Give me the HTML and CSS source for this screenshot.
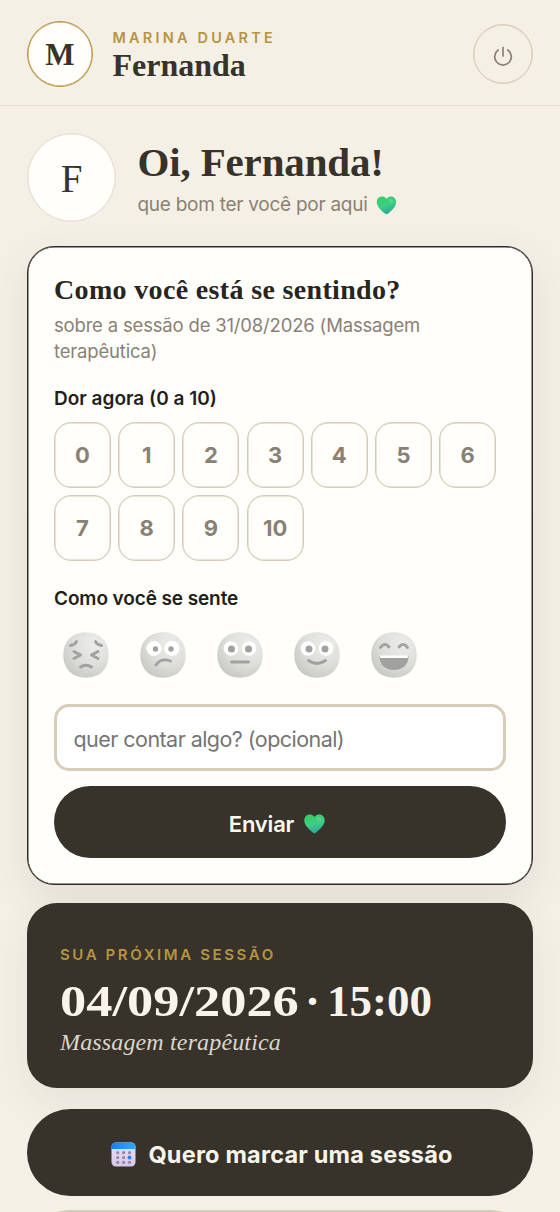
FILE: index.html
```html
<!DOCTYPE html>
<html lang="pt-BR">
<head>
<meta charset="utf-8">
<meta name="viewport" content="width=device-width, initial-scale=1">
<title>Marina Duarte</title>
<link rel="stylesheet" href="styles.css">
</head>
<body>
<svg class="defs" width="0" height="0" aria-hidden="true">
  <defs>
    <radialGradient id="face" cx="0.68" cy="0.25" r="0.85"><stop offset="0" stop-color="#ececea"/><stop offset="0.55" stop-color="#dededb"/><stop offset="1" stop-color="#c6c6c3"/></radialGradient>
    <linearGradient id="heart" x1="0.3" y1="0" x2="0.65" y2="1"><stop offset="0" stop-color="#35cf62"/><stop offset="0.5" stop-color="#3fcd86"/><stop offset="1" stop-color="#2ba39c"/></linearGradient>
    <linearGradient id="cal" x1="0" y1="0" x2="1" y2="0"><stop offset="0" stop-color="#1c7df0"/><stop offset="1" stop-color="#31a8ff"/></linearGradient>
    <linearGradient id="page" x1="0" y1="0" x2="0" y2="1"><stop offset="0" stop-color="#e9e2f2"/><stop offset="1" stop-color="#d9c6ea"/></linearGradient>
    <symbol id="i-heart" viewBox="0 0 22 20"><path fill="url(#heart)" d="M11 3C9.600 1 7.800.5 6.200.5C3 .5.800 3 .800 6.200C.800 11.500 6 15.500 9.700 18.700Q11 19.700 12.300 18.700C16 15.500 21.200 11.500 21.200 6.200C21.200 3 19 .5 15.800.5C14.200.5 12.400 1 11 3Z"/><ellipse cx="15.500" cy="5" rx="2.800" ry="1.600" fill="#7be8a0" opacity=".35" transform="rotate(25 15.500 5)"/></symbol>
    <symbol id="i-face" viewBox="0 0 46 46"><path fill="url(#face)" d="M23 .3C36.700 .3 45.700 9.300 45.700 23S36.700 45.700 23 45.700.3 36.700 .3 23 9.300 .3 23 .3Z"/></symbol>
  </defs>
</svg>
<header class="topbar">
  <div class="logo">M</div>
  <div class="brand">
    <div class="brand-name">MARINA DUARTE</div>
    <div class="brand-user">Fernanda</div>
  </div>
  <button class="power" aria-label="Sair"><svg width="20" height="20" viewBox="0 0 20 20" fill="none" stroke="#8a8175" stroke-width="1.700" stroke-linecap="round"><path d="M10 1.400V10M5.200 4A8.300 8.300 0 1 0 14.800 4"/></svg></button>
</header>
<main class="content">
  <section class="hello">
    <div class="avatar">F</div>
    <div>
      <h1 class="hello-title">Oi, Fernanda!</h1>
      <p class="hello-sub"><span>que bom ter você por aqui</span><svg width="21" height="19"><use href="#i-heart"/></svg></p>
    </div>
  </section>

  <section class="checkin">
    <h2 class="checkin-title">Como você está se sentindo?</h2>
    <p class="checkin-sub">sobre a sessão de 31/08/2026 (Massagem<br>terapêutica)</p>
    <div class="label label-pain">Dor agora (0 a 10)</div>
    <div class="scale">
      <button>0</button><button>1</button><button>2</button><button>3</button><button>4</button><button>5</button><button>6</button><button>7</button><button>8</button><button>9</button><button>10</button>
    </div>
    <div class="label label-mood">Como você se sente</div>
    <div class="moods">
      <svg viewBox="0 0 46 46"><use href="#i-face"/><g fill="none" stroke="#a1a1a0" stroke-width="2.900" stroke-linecap="round" stroke-linejoin="round"><path d="M7.500 13.500Q12 13 13.500 9.500M38.500 13.500Q34 13 32.500 9.500M11 19.500L17.500 23L11 26.500M35 19.500L28.500 23L35 26.500M17.500 35Q23 31.500 28.500 35"/></g></svg>
      <svg viewBox="0 0 46 46"><use href="#i-face"/><circle cx="14" cy="16.500" r="7.600" fill="#fff"/><circle cx="32" cy="16.500" r="7.600" fill="#fff"/><g fill="#a1a1a0"><circle cx="15.500" cy="17" r="2.700"/><circle cx="31" cy="17" r="2.700"/></g><path d="M16 33Q21 25.500 30.500 29" fill="none" stroke="#a1a1a0" stroke-width="2.900" stroke-linecap="round"/></svg>
      <svg viewBox="0 0 46 46"><use href="#i-face"/><circle cx="14" cy="16.500" r="7.300" fill="#fff"/><circle cx="32" cy="16.500" r="7.300" fill="#fff"/><g fill="#a1a1a0"><circle cx="14.500" cy="17" r="3.500"/><circle cx="31.500" cy="17" r="3.500"/></g><path d="M14.500 30H31.500" stroke="#a1a1a0" stroke-width="2.900" stroke-linecap="round"/></svg>
      <svg viewBox="0 0 46 46"><use href="#i-face"/><circle cx="14" cy="16.500" r="7.300" fill="#fff"/><circle cx="32" cy="16.500" r="7.300" fill="#fff"/><g fill="#a1a1a0"><circle cx="15" cy="17" r="3.500"/><circle cx="31" cy="17" r="3.500"/></g><path d="M14.500 28.500Q23 34.500 31.500 28.500" fill="none" stroke="#a1a1a0" stroke-width="3" stroke-linecap="round"/></svg>
      <svg viewBox="0 0 46 46"><use href="#i-face"/><g fill="none" stroke="#a1a1a0" stroke-width="2.900" stroke-linecap="round"><path d="M9.500 15.500Q13.500 9.500 18 15M28 15Q32.500 9.500 36.500 15.500"/></g><path fill="#a1a1a0" d="M8.500 24H37.500C38 32.500 31.500 38 23 38S8 32.500 8.500 24Z"/><path fill="#fff" d="M8.700 23.500H37.300L36.500 26H9.500Z"/></svg>
    </div>
    <input class="note" placeholder="quer contar algo? (opcional)">
    <button class="send"><span>Enviar</span><svg width="23" height="20"><use href="#i-heart"/></svg></button>
  </section>

  <section class="next">
    <div class="next-label">SUA PRÓXIMA SESSÃO</div>
    <div class="next-date"><span class="day">04/09/2026</span><span>·</span><span>15:00</span></div>
    <div class="next-kind">Massagem terapêutica</div>
  </section>

  <button class="book">
    <svg width="25" height="25" viewBox="0 0 25 25"><rect x=".5" y=".5" width="24" height="24" rx="4.500" fill="url(#page)"/><path fill="url(#cal)" d="M.5 7V5Q.5.5 5 .5H20Q24.500.5 24.500 5V7Z"/><g fill="#9587aa"><circle cx="6.700" cy="10.700" r="1.600"/><circle cx="12.600" cy="10.700" r="1.600"/><circle cx="18.500" cy="10.700" r="1.600"/><circle cx="6.700" cy="15.500" r="1.600"/><circle cx="12.600" cy="15.500" r="1.600"/><circle cx="6.700" cy="20.300" r="1.600"/><circle cx="12.600" cy="20.300" r="1.600"/><circle cx="18.500" cy="20.300" r="1.600"/></g><circle cx="18.500" cy="15.500" r="1.900" fill="#188af5"/></svg>
    <span>Quero marcar uma sessão</span>
  </button>
  <div class="more"></div>
</main>
</body>
</html>
```
FILE: styles.css
```css
* { box-sizing: border-box; margin: 0; padding: 0; }
html { overflow: hidden; }
body {
  height: 1212px;
  overflow: hidden;
  background: #f5f0e6;
  color: #37322a;
  font-family: Inter, "Liberation Sans", sans-serif;
}
button { font: inherit; color: inherit; background: none; border: 0; }
svg { display: block; flex: none; }
.defs { position: absolute; }

.topbar {
  height: 106px;
  padding: 2px 27px 0;
  display: flex;
  align-items: center;
  border-bottom: 1px solid #e6e0d3;
}
.logo {
  width: 66px; height: 66px;
  border: 1px solid #b8943e;
  box-shadow: inset 0 0 0 .5px #b8943e;
  border-radius: 50%;
  background: #fffefa;
  display: grid; place-items: center;
  font: 700 31px/1 "Liberation Serif", serif;
  padding-top: 2px;
}
.brand { flex: 1; padding: 6px 0 0 19.500px; }
.brand-name { font-size: 14.500px; line-height: 18px; font-weight: 600; letter-spacing: 3.200px; color: #b8943e; white-space: nowrap; }
.brand-user { font: 700 32px/37px "Liberation Serif", serif; }
.power {
  width: 60px; height: 60px;
  border: 1px solid #d6ccb8;
  box-shadow: inset 0 0 0 .5px #d6ccb8;
  border-radius: 50%;
  display: grid; place-items: center;
}
.power svg { margin-top: 4px; }

.content { height: 1106px; overflow: hidden; padding: 27px 27px 0; display: flex; flex-direction: column; }
.content > * { flex: none; }
.hello { display: flex; align-items: center; gap: 21.500px; height: 89px; }
.avatar {
  width: 89px; height: 89px;
  border: 1px solid #e6dfd1;
  box-shadow: inset 0 0 0 .5px #e6dfd1;
  border-radius: 50%;
  background: #fffefa;
  display: grid; place-items: center;
  font: 400 39px/1 "Liberation Serif", serif;
  padding-top: 1px;
}
.hello-title { font: 700 41px/46px "Liberation Serif", serif; letter-spacing: -.15px; white-space: nowrap; }
.hello-sub { margin-top: 7px; margin-bottom: -2px; display: flex; align-items: center; gap: 8px; font-size: 19px; line-height: 26px; letter-spacing: -.26px; color: #8a8175; white-space: nowrap; }

.checkin {
  margin-top: 24px;
  height: 639px;
  padding: 27px 26px 0 26px;
  border: 1px solid #302b25;
  box-shadow: inset 0 0 0 .5px #302b25, 0 14px 42px rgba(70, 65, 45, .1);
  border-radius: 27px;
  background: #fffefa;
}
.checkin-title { font: 700 28px/32px "Liberation Serif", serif; letter-spacing: .34px; color: #28251f; white-space: nowrap; }
.checkin-sub { margin-top: 6px; font-size: 18.500px; line-height: 26px; letter-spacing: -.18px; color: #8a8175; white-space: nowrap; }
.label { font-size: 19px; line-height: 26px; font-weight: 600; color: #211f1a; white-space: nowrap; }
.label-pain { margin-top: 22px; }
.scale { margin-top: 10px; display: grid; grid-template-columns: repeat(7, 57px); column-gap: 7.200px; row-gap: 7.300px; grid-auto-rows: 66px; }
.scale button { border: 1px solid #d6ccb8; box-shadow: inset 0 0 0 .5px #d6ccb8; border-radius: 17px; font-size: 22px; font-weight: 700; color: #8a8175; }
.label-mood { margin-top: 25px; letter-spacing: -.1px; }
.moods { margin-top: 20px; padding-left: 8.500px; display: flex; gap: 31px; }
.moods svg { width: 46px; height: 46px; }
.note {
  display: block;
  width: 100%; height: 67px;
  margin-top: 26px;
  padding: 2px 16.500px 0;
  border: 3px solid #d6ccb8;
  border-radius: 15px;
  background: #fff;
  font: 400 21.500px "Inter", sans-serif;
  letter-spacing: -.55px;
}
.note::placeholder { color: #757575; opacity: 1; }
.send {
  width: 100%; height: 72px;
  margin-top: 15px;
  padding: 3px 5px 0 0;
  border-radius: 36px;
  background: #37322a;
  color: #fbf8f1;
  display: flex; align-items: center; justify-content: center; gap: 9px;
  font-size: 22px; font-weight: 600; letter-spacing: -.2px;
}

.next {
  margin-top: 18px;
  height: 185px;
  padding: 42px 33px 0;
  border-radius: 30px;
  background: #37322a;
  color: #f8f4ec;
  box-shadow: 0 14px 42px rgba(70, 65, 45, .08);
}
.next-label { font-size: 15px; line-height: 20px; font-weight: 600; letter-spacing: 2.600px; color: #b8943e; white-space: nowrap; }
.next-date { margin-top: 10px; display: flex; gap: 7px; font: 700 45px/52px "Liberation Serif", serif; white-space: nowrap; }
.day { width: 238px; transform: scaleX(1.165); transform-origin: left; }
.next-kind { margin-top: 1px; font: italic 400 24px/28px "Liberation Serif", serif; letter-spacing: .15px; color: #ddd6ca; white-space: nowrap; }
.book {
  margin-top: 21px;
  height: 87px;
  padding: 4px 0 0 4px;
  border-radius: 44px;
  background: #37322a;
  color: #f8f4ec;
  display: flex; align-items: center; justify-content: center; gap: 12px;
  font-size: 23.500px; font-weight: 700; letter-spacing: .2px; white-space: nowrap;
}
.more { margin-top: 14px; height: 87px; border: 2px solid #d6ccb8; border-radius: 44px; }
```
